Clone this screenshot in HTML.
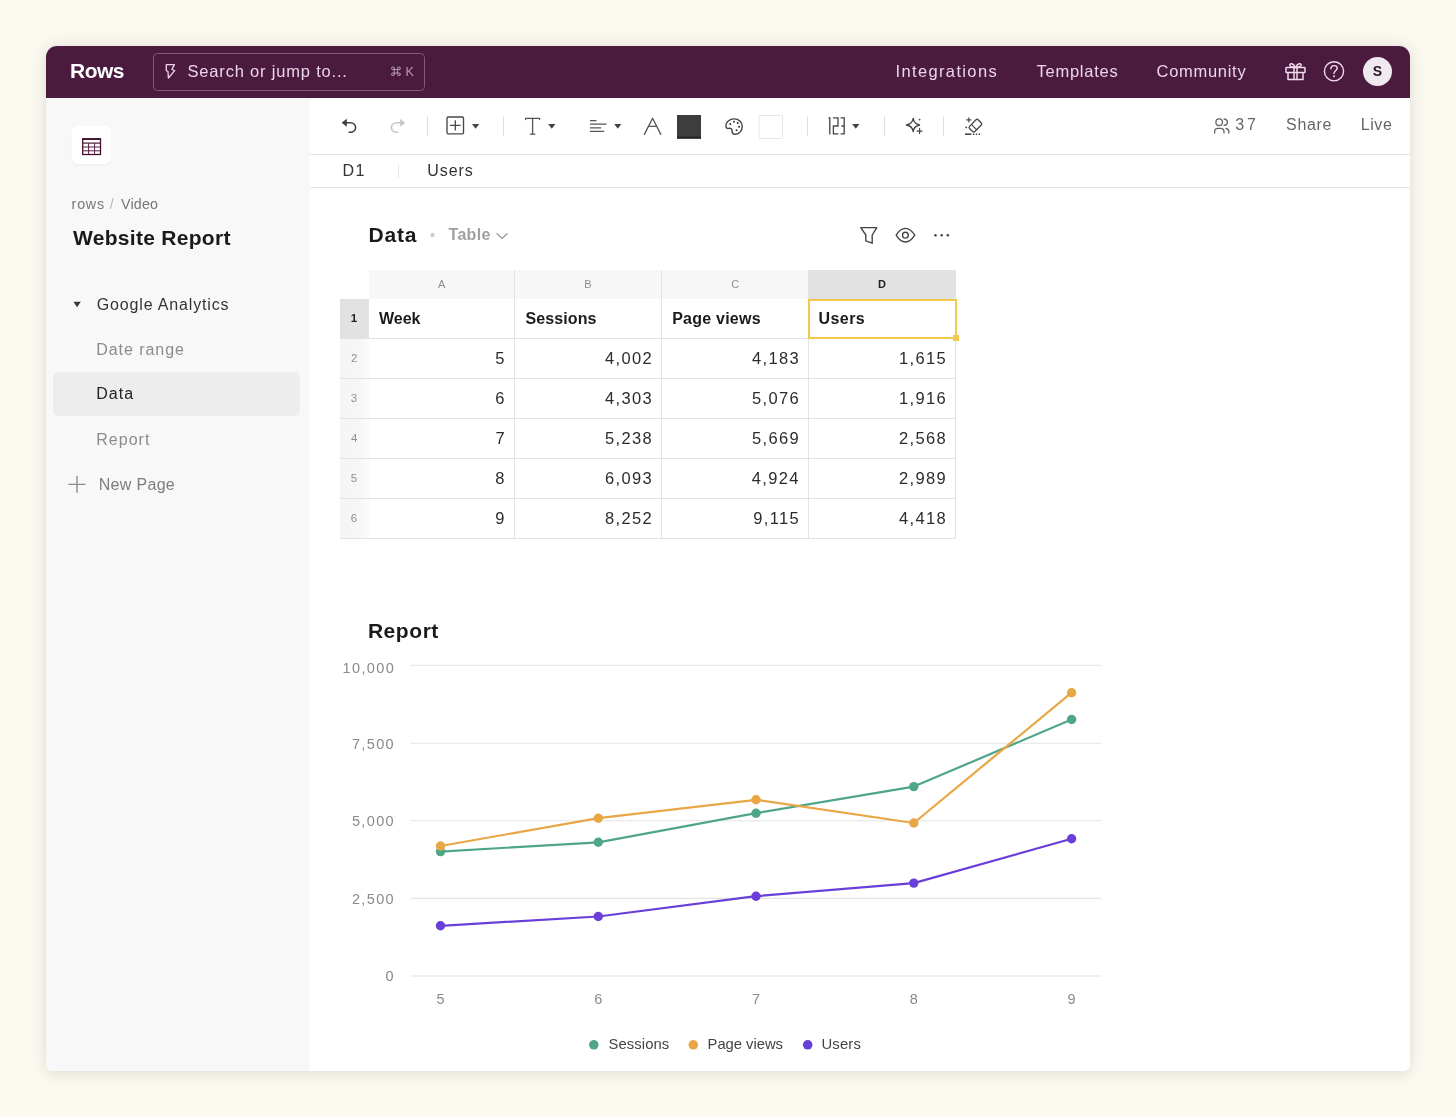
<!DOCTYPE html>
<html>
<head>
<meta charset="utf-8">
<title>Rows - Website Report</title>
<style>
*{box-sizing:border-box;margin:0;padding:0}
html,body{width:1456px;height:1117px;overflow:hidden}
body{background:#fcf9f1;font-family:"Liberation Sans",sans-serif;position:relative;color:#222}
.abs{position:absolute;white-space:pre;line-height:1}
#shadow{position:absolute;left:46px;top:46px;width:1364px;height:1025px;border-radius:11px 11px 7px 7px;box-shadow:0 0 18px rgba(65,68,52,.12),0 5px 12px rgba(65,68,52,.05)}
#win{position:absolute;left:46px;top:46px;width:1364px;height:1025px;background:#fff;border-radius:11px 11px 7px 7px;overflow:hidden}
#topbar{position:absolute;left:0;top:0;width:1364px;height:52px;background:#4a1a3f}
#sidebar{position:absolute;left:0;top:52px;width:264px;height:973px;background:#f8f8f8}
#tbline{position:absolute;left:264px;top:108px;width:1100px;height:1px;background:#e2e2e2}
#fbline{position:absolute;left:264px;top:141px;width:1100px;height:1px;background:#e4e4e4}
#page{position:absolute;left:0;top:0;width:1456px;height:1117px;will-change:transform}
</style>
</head>
<body>
<div id="shadow"></div>
<div id="win">
  <div id="topbar"></div>
  <div id="sidebar"></div>
  <div id="tbline"></div>
  <div id="fbline"></div>
</div>
<div id="page">
<!-- SHAPES -->
<div class="abs" style="left:153px;top:52.5px;width:271.5px;height:38px;border:1px solid #80597a;border-radius:4.5px"></div>
<div class="abs" style="left:1363px;top:56.5px;width:29.4px;height:29.4px;border-radius:50%;background:#f0e9ef"></div>
<div class="abs" style="left:72px;top:126px;width:39px;height:38px;border-radius:6px;background:#fff;box-shadow:0 1px 2px rgba(0,0,0,.05)"></div>
<div class="abs" style="left:53px;top:372px;width:247px;height:44px;border-radius:5px;background:#ededed"></div>
<div class="abs" style="left:398px;top:164px;width:1px;height:14px;background:#e6e6e6"></div>
<!-- TABLE -->
<div class="abs" style="left:369px;top:269.5px;width:587px;height:29.5px;background:#f7f7f7"></div>
<div class="abs" style="left:809px;top:269.5px;width:147px;height:29.5px;background:#e2e2e2"></div>
<div class="abs" style="left:340px;top:338px;width:29px;height:200px;background:linear-gradient(90deg,#f5f5f5 0,#f7f7f7 70%,#fbfbfb 100%)"></div>
<div class="abs" style="left:340px;top:299px;width:29px;height:39px;background:#e2e2e2"></div>
<div class="abs" style="left:340px;top:338px;width:616px;height:1px;background:#e3e3e3"></div>
<div class="abs" style="left:340px;top:378px;width:616px;height:1px;background:#e3e3e3"></div>
<div class="abs" style="left:340px;top:418px;width:616px;height:1px;background:#e3e3e3"></div>
<div class="abs" style="left:340px;top:458px;width:616px;height:1px;background:#e3e3e3"></div>
<div class="abs" style="left:340px;top:498px;width:616px;height:1px;background:#e3e3e3"></div>
<div class="abs" style="left:340px;top:538px;width:616px;height:1px;background:#e3e3e3"></div>
<div class="abs" style="left:514px;top:269.5px;width:1px;height:269.5px;background:#e3e3e3"></div>
<div class="abs" style="left:661px;top:269.5px;width:1px;height:269.5px;background:#e3e3e3"></div>
<div class="abs" style="left:808px;top:269.5px;width:1px;height:269.5px;background:#e3e3e3"></div>
<div class="abs" style="left:955px;top:269.5px;width:1px;height:269.5px;background:#e3e3e3"></div>
<div class="abs" style="left:808px;top:298.5px;width:148.5px;height:40px;border:2px solid #f2c94c"></div>
<div class="abs" style="left:953px;top:335px;width:6px;height:6px;background:#f2c94c"></div>
<!-- CHART -->
<svg class="abs" style="left:0;top:0" width="1456" height="1117" viewBox="0 0 1456 1117">
<line x1="410.5" x2="1101" y1="665.2" y2="665.2" stroke="#e4e4e4" stroke-width="1.1"/>
<line x1="410.5" x2="1101" y1="743.2" y2="743.2" stroke="#e4e4e4" stroke-width="1.1"/>
<line x1="410.5" x2="1101" y1="820.8" y2="820.8" stroke="#e4e4e4" stroke-width="1.1"/>
<line x1="410.5" x2="1101" y1="898.4" y2="898.4" stroke="#e4e4e4" stroke-width="1.1"/>
<line x1="410.5" x2="1101" y1="976" y2="976" stroke="#e4e4e4" stroke-width="1.1"/>
<polyline points="440.5,851.6 598.3,842.3 756.0,813.2 913.8,786.6 1071.6,719.5" fill="none" stroke="#4fa58a" stroke-width="2.2" stroke-linejoin="round"/>
<circle cx="440.5" cy="851.6" r="4.7" fill="#4fa58a"/>
<circle cx="598.3" cy="842.3" r="4.7" fill="#4fa58a"/>
<circle cx="756.0" cy="813.2" r="4.7" fill="#4fa58a"/>
<circle cx="913.8" cy="786.6" r="4.7" fill="#4fa58a"/>
<circle cx="1071.6" cy="719.5" r="4.7" fill="#4fa58a"/>
<polyline points="440.5,846.0 598.3,818.2 756.0,799.8 913.8,823.0 1071.6,692.7" fill="none" stroke="#e9a645" stroke-width="2.2" stroke-linejoin="round"/>
<circle cx="440.5" cy="846.0" r="4.7" fill="#e9a645"/>
<circle cx="598.3" cy="818.2" r="4.7" fill="#e9a645"/>
<circle cx="756.0" cy="799.8" r="4.7" fill="#e9a645"/>
<circle cx="913.8" cy="823.0" r="4.7" fill="#e9a645"/>
<circle cx="1071.6" cy="692.7" r="4.7" fill="#e9a645"/>
<polyline points="440.5,925.8 598.3,916.5 756.0,896.2 913.8,883.1 1071.6,838.7" fill="none" stroke="#6a3fd9" stroke-width="2.2" stroke-linejoin="round"/>
<circle cx="440.5" cy="925.8" r="4.7" fill="#6a3fd9"/>
<circle cx="598.3" cy="916.5" r="4.7" fill="#6a3fd9"/>
<circle cx="756.0" cy="896.2" r="4.7" fill="#6a3fd9"/>
<circle cx="913.8" cy="883.1" r="4.7" fill="#6a3fd9"/>
<circle cx="1071.6" cy="838.7" r="4.7" fill="#6a3fd9"/>
<circle cx="593.8" cy="1044.8" r="4.8" fill="#4fa58a"/><circle cx="693.3" cy="1044.8" r="4.8" fill="#e9a645"/><circle cx="807.7" cy="1044.8" r="4.8" fill="#6a3fd9"/>
</svg>
<!-- ICONS -->
<svg class="abs" style="left:0;top:0" width="1456" height="1117" viewBox="0 0 1456 1117" fill="none" stroke-linecap="round" stroke-linejoin="round">
<!-- bolt -->
<path d="M166.3 64.6 H174.4 L171.9 69.4 L174.7 70.6 L168.4 78 L168 71.5 L166.3 70.6 Z" stroke="#eccfe7" stroke-width="1.35"/>
<!-- cmd symbol -->
<g stroke="#b59ab0" stroke-width="1" >
<path d="M394.2 69.6 V73 M397.6 69.6 V73 M394.2 69.6 H397.6 M394.2 73 H397.6"/>
<circle cx="392.9" cy="68.3" r="1.4"/><circle cx="398.9" cy="68.3" r="1.4"/><circle cx="392.9" cy="74.3" r="1.4"/><circle cx="398.9" cy="74.3" r="1.4"/>
</g>
<!-- gift -->
<g stroke="#f0dcec" stroke-width="1.5">
<rect x="1286" y="67.6" width="19" height="5"  rx=".6"/>
<path d="M1288 72.8 V79.6 H1303 V72.8"/>
<path d="M1294 67.6 V79.6 M1297 67.6 V79.6"/>
<path d="M1295.2 67.4 C1292.5 67.4 1289.6 66.6 1289.8 64.8 C1290 63 1293.4 63 1295.2 67.4 Z M1295.8 67.4 C1298.5 67.4 1301.4 66.6 1301.2 64.8 C1301 63 1297.6 63 1295.8 67.4 Z"/>
</g>
<!-- help -->
<g stroke="#f0dcec" stroke-width="1.4">
<circle cx="1334" cy="71.3" r="9.6"/>
<path d="M1330.9 68.8 C1330.9 66.7 1332.4 65.6 1334.1 65.6 C1335.8 65.6 1337.2 66.7 1337.2 68.3 C1337.2 70.6 1334 70.6 1334 73.4"/>
</g>
<circle cx="1334" cy="76.3" r="1" fill="#f0dcec"/>

<!-- sidebar table icon -->
<g stroke="#45102f" stroke-linecap="butt" stroke-linejoin="miter">
<rect x="82.7" y="138.8" width="17.8" height="15.7" stroke-width="1.3"/>
<path d="M82.7 139.2 H100.5" stroke-width="1.6"/>
<path d="M82.7 143.1 H100.5" stroke-width="1.15"/>
<path d="M82.7 147 H100.5 M82.7 150.8 H100.5 M88.6 143.1 V154.5 M94.6 143.1 V154.5" stroke-width="1" stroke="#5a1f47"/>
</g>
<!-- sidebar triangle -->
<path d="M73.4 301.8 H80.8 L77.1 307.2 Z" fill="#3a3a3a"/>
<!-- plus -->
<path d="M68.4 484.4 H85.6 M77 476 V492.8" stroke="#8a8a8a" stroke-width="1.4" stroke-linecap="butt"/>

<!-- undo -->
<path d="M345.6 122.8 H350.2 C353.4 122.8 355.6 124.8 355.6 127.5 C355.6 130.2 353.4 132.3 350.2 132.3 H349.2" stroke="#3f3f3f" stroke-width="1.6"/>
<path d="M341.7 122.8 L346.8 118.8 V126.8 Z" fill="#3f3f3f"/>
<!-- redo -->
<path d="M401.4 122.8 H396.8 C393.6 122.8 391.4 124.8 391.4 127.5 C391.4 130.2 393.6 132.3 396.8 132.3 H397.8" stroke="#c8c8c8" stroke-width="1.6"/>
<path d="M405.3 122.8 L400.2 118.8 V126.8 Z" fill="#c8c8c8"/>
<!-- separators -->
<path d="M427.5 116 V136 M503.5 116 V136 M807.5 116 V136 M884.5 116 V136 M943.5 116 V136" stroke="#e0e0e0" stroke-width="1" stroke-linecap="butt"/>
<!-- box plus -->
<g stroke="#484848" stroke-width="1.35">
<rect x="447" y="117" width="16.5" height="16.8" rx="1.2"/>
<path d="M450 125.4 H460.6 M455.3 120.2 V130.6" stroke-width="1.3" stroke-linecap="butt"/>
</g>
<!-- carets -->
<g fill="#444">
<path d="M472 124 H479.2 L475.6 128.8 Z"/>
<path d="M548.2 124 H555.4 L551.8 128.8 Z"/>
<path d="M614.2 124 H621.4 L617.8 128.8 Z"/>
<path d="M852.2 124 H859.4 L855.8 128.8 Z"/>
</g>
<!-- T -->
<g stroke="#555" stroke-width="1.3">
<path d="M525.6 119.6 V118.4 H539.6 V119.6 M532.6 118.4 V134.2 M530.4 134.2 H534.8"/>
</g>
<!-- align -->
<g stroke="#555" stroke-width="1.3" stroke-linecap="butt">
<path d="M590 120.6 H596.4 M590 124.2 H606.4 M590 127.8 H601.2 M590 131.4 H604.2"/>
</g>
<!-- A -->
<path d="M644.4 134.4 L652.6 118.2 L660.8 134.4 M648.2 126.4 H657" stroke="#555" stroke-width="1.3"/>
<!-- dark swatch -->
<rect x="677" y="115" width="24" height="23.6" fill="#3d3d3d"/>
<rect x="677" y="136.6" width="24" height="2" fill="#222"/>
<!-- palette -->
<g stroke="#444" stroke-width="1.4">
<path d="M734.2 118.9 C729.4 118.9 725.9 122.4 725.9 126 C725.9 128.2 727.4 128.8 728.9 128.4 C730.6 127.9 732 128.6 732 130.4 C732 132.6 733 134.2 735.2 134.2 C739.4 134.2 742.2 130.6 742.2 126.4 C742.2 122.2 738.8 118.9 734.2 118.9 Z"/>
</g>
<g fill="#333"><circle cx="730.3" cy="123.9" r="1"/><circle cx="734" cy="121.8" r="1"/><circle cx="737.7" cy="123.1" r="1"/><circle cx="739.1" cy="126.7" r="1"/><circle cx="736.6" cy="130.3" r="1"/></g>
<!-- white swatch -->
<rect x="759.5" y="115.5" width="23" height="23" fill="#fff" stroke="#e6e6e6" stroke-width="1"/>
<!-- 123 -->
<g stroke="#444" stroke-width="1.3" stroke-linecap="butt" stroke-linejoin="miter">
<path d="M828.4 117.8 H829.8 V134.4"/>
<path d="M833 117.8 H838 V126 H833.4 V133.8 H838.4"/>
<path d="M840.6 117.8 H844.2 V133.8 H840.6 M841.4 126 H844.2"/>
</g>
<!-- sparkle -->
<g stroke="#444" stroke-width="1.3">
<path d="M913.2 118.4 C913.8 122.4 915.4 124.2 919.6 125 C915.4 125.8 913.8 127.6 913.2 131.6 C912.6 127.6 911 125.8 906.4 125 C911 124.2 912.6 122.4 913.2 118.4 Z"/>
<path d="M919.6 128.6 V133.6 M917.1 131.1 H922.1" stroke-width="1.2"/>
</g>
<circle cx="919.6" cy="119.6" r=".9" fill="#444"/>
<!-- eraser -->
<g stroke="#444" stroke-width="1.3">
<rect x="-6.1" y="-3.7" width="12.2" height="7.4" rx="1.5" transform="translate(975.4 125.7) rotate(-45)"/>
<path d="M971.6 124.6 L976.6 129.6"/>
<path d="M968.8 117.8 V122 M966.7 119.9 H970.9" stroke-width="1.1"/>
<path d="M965 134.2 H971.4" stroke-width="1.6" stroke-linecap="butt"/>
<path d="M973 134.2 H981.6" stroke-width="1.4" stroke-dasharray="1.4 1.4" stroke-linecap="butt"/>
</g>
<circle cx="966.2" cy="127.4" r=".9" fill="#444"/>
<!-- people -->
<g stroke="#666" stroke-width="1.3">
<circle cx="1219.2" cy="122.2" r="3.3"/>
<path d="M1214.6 133 V131.6 C1214.6 129.6 1216 128.4 1218 128.4 H1220.6 C1222.6 128.4 1224 129.6 1224 131.6 V133"/>
<path d="M1224.2 119 C1226 119.2 1227.4 120.5 1227.4 122.2 C1227.4 123.9 1226 125.2 1224.2 125.4"/>
<path d="M1226 128.5 C1227.8 128.8 1228.8 130 1228.8 131.6 V133"/>
</g>
<!-- filter -->
<path d="M860.8 227.6 H876.8 L872.2 235 V243.2 L865.8 240.8 V235 Z" stroke="#444" stroke-width="1.4"/>
<!-- eye -->
<g stroke="#444" stroke-width="1.4">
<path d="M896.2 235.2 C899 230.6 902 228.4 905.4 228.4 C908.8 228.4 911.8 230.6 914.8 235.2 C911.8 239.8 908.8 242 905.4 242 C902 242 899 239.8 896.2 235.2 Z"/>
<circle cx="905.4" cy="235.2" r="2.9"/>
</g>
<!-- dots -->
<g fill="#444"><circle cx="935.5" cy="235.3" r="1.25"/><circle cx="941.7" cy="235.3" r="1.25"/><circle cx="947.8" cy="235.3" r="1.25"/></g>
<!-- table dot + chevron -->
<circle cx="432.6" cy="235" r="2.2" fill="#cfcfcf"/>
<path d="M497 233.6 L502.1 238.4 L507.2 233.6" stroke="#8a8a8a" stroke-width="1.2"/>
</svg>
<!-- TEXT -->
<div class="abs" style="left:70.10px;top:60px;font-size:21px;color:#fff;letter-spacing:-0.58px;font-weight:bold">Rows</div>
<div class="abs" style="left:187.55px;top:63px;font-size:16.5px;color:#ecd6e8;letter-spacing:0.81px">Search or jump to...</div>
<div class="abs" style="left:405.60px;top:66px;font-size:12.5px;color:#b79bb2;letter-spacing:0.00px">K</div>
<div class="abs" style="left:895.50px;top:63px;font-size:16.5px;color:#ecd6e8;letter-spacing:1.36px">Integrations</div>
<div class="abs" style="left:1036.45px;top:63px;font-size:16.5px;color:#ecd6e8;letter-spacing:0.77px">Templates</div>
<div class="abs" style="left:1156.55px;top:63px;font-size:16.5px;color:#ecd6e8;letter-spacing:0.71px">Community</div>
<div class="abs" style="left:1372.70px;top:64px;font-size:14px;color:#2a1025;letter-spacing:0.00px;font-weight:bold">S</div>
<div class="abs" style="left:71.60px;top:197px;font-size:14.3px;color:#777;letter-spacing:0.78px">rows</div>
<div class="abs" style="left:109.80px;top:197px;font-size:14.3px;color:#b5b5b5;letter-spacing:0.00px">/</div>
<div class="abs" style="left:121.10px;top:197px;font-size:14.3px;color:#777;letter-spacing:0.16px">Video</div>
<div class="abs" style="left:73.00px;top:227px;font-size:21px;color:#1a1a1a;letter-spacing:0.29px;font-weight:bold">Website Report</div>
<div class="abs" style="left:96.75px;top:297px;font-size:16px;color:#333;letter-spacing:0.84px">Google Analytics</div>
<div class="abs" style="left:96.25px;top:342px;font-size:16px;color:#8c8c8c;letter-spacing:0.94px">Date range</div>
<div class="abs" style="left:96.25px;top:386px;font-size:16px;color:#222;letter-spacing:1.00px">Data</div>
<div class="abs" style="left:96.25px;top:432px;font-size:16px;color:#8c8c8c;letter-spacing:1.01px">Report</div>
<div class="abs" style="left:98.75px;top:477px;font-size:16px;color:#7d7d7d;letter-spacing:0.31px">New Page</div>
<div class="abs" style="left:1235.25px;top:117px;font-size:16px;color:#666;letter-spacing:2.95px">37</div>
<div class="abs" style="left:1286.05px;top:117px;font-size:16px;color:#666;letter-spacing:0.69px">Share</div>
<div class="abs" style="left:1360.85px;top:117px;font-size:16px;color:#666;letter-spacing:0.53px">Live</div>
<div class="abs" style="left:342.55px;top:163px;font-size:16px;color:#333;letter-spacing:1.50px">D1</div>
<div class="abs" style="left:427.35px;top:163px;font-size:16px;color:#333;letter-spacing:0.88px">Users</div>
<div class="abs" style="left:368.40px;top:224px;font-size:21px;color:#1a1a1a;letter-spacing:0.82px;font-weight:bold">Data</div>
<div class="abs" style="left:448.55px;top:227px;font-size:16px;color:#a0a0a0;letter-spacing:0.29px;font-weight:bold">Table</div>
<div class="abs" style="left:367.90px;top:620px;font-size:21px;color:#1a1a1a;letter-spacing:0.56px;font-weight:bold">Report</div>
<div class="abs" style="left:438.07px;top:279px;font-size:11px;color:#8e8e8e;letter-spacing:0.00px">A</div>
<div class="abs" style="left:584.33px;top:279px;font-size:11px;color:#8e8e8e;letter-spacing:0.00px">B</div>
<div class="abs" style="left:731.20px;top:279px;font-size:11px;color:#8e8e8e;letter-spacing:0.00px">C</div>
<div class="abs" style="left:878.08px;top:279px;font-size:11px;color:#222;letter-spacing:0.00px;font-weight:bold">D</div>
<div class="abs" style="left:350.73px;top:313px;font-size:11.5px;color:#222;letter-spacing:0.00px;font-weight:bold">1</div>
<div class="abs" style="left:350.98px;top:353px;font-size:11.5px;color:#8f8f8f;letter-spacing:0.00px">2</div>
<div class="abs" style="left:350.85px;top:393px;font-size:11.5px;color:#8f8f8f;letter-spacing:0.00px">3</div>
<div class="abs" style="left:350.98px;top:433px;font-size:11.5px;color:#8f8f8f;letter-spacing:0.00px">4</div>
<div class="abs" style="left:350.85px;top:473px;font-size:11.5px;color:#8f8f8f;letter-spacing:0.00px">5</div>
<div class="abs" style="left:350.85px;top:513px;font-size:11.5px;color:#8f8f8f;letter-spacing:0.00px">6</div>
<div class="abs" style="left:379.00px;top:311px;font-size:16px;color:#1a1a1a;letter-spacing:0.00px;font-weight:bold">Week</div>
<div class="abs" style="left:525.50px;top:311px;font-size:16px;color:#1a1a1a;letter-spacing:0.09px;font-weight:bold">Sessions</div>
<div class="abs" style="left:672.20px;top:311px;font-size:16px;color:#1a1a1a;letter-spacing:0.23px;font-weight:bold">Page views</div>
<div class="abs" style="left:818.60px;top:311px;font-size:16px;color:#1a1a1a;letter-spacing:0.41px;font-weight:bold">Users</div>
<div class="abs" style="left:495.30px;top:350px;font-size:16.5px;color:#2b2b2b;letter-spacing:1.30px">5</div>
<div class="abs" style="left:605.10px;top:350px;font-size:16.5px;color:#2b2b2b;letter-spacing:1.30px">4,002</div>
<div class="abs" style="left:752.10px;top:350px;font-size:16.5px;color:#2b2b2b;letter-spacing:1.30px">4,183</div>
<div class="abs" style="left:899.10px;top:350px;font-size:16.5px;color:#2b2b2b;letter-spacing:1.30px">1,615</div>
<div class="abs" style="left:495.30px;top:390px;font-size:16.5px;color:#2b2b2b;letter-spacing:1.30px">6</div>
<div class="abs" style="left:605.10px;top:390px;font-size:16.5px;color:#2b2b2b;letter-spacing:1.30px">4,303</div>
<div class="abs" style="left:752.10px;top:390px;font-size:16.5px;color:#2b2b2b;letter-spacing:1.30px">5,076</div>
<div class="abs" style="left:899.10px;top:390px;font-size:16.5px;color:#2b2b2b;letter-spacing:1.30px">1,916</div>
<div class="abs" style="left:495.55px;top:430px;font-size:16.5px;color:#2b2b2b;letter-spacing:1.30px">7</div>
<div class="abs" style="left:605.10px;top:430px;font-size:16.5px;color:#2b2b2b;letter-spacing:1.30px">5,238</div>
<div class="abs" style="left:752.10px;top:430px;font-size:16.5px;color:#2b2b2b;letter-spacing:1.30px">5,669</div>
<div class="abs" style="left:899.10px;top:430px;font-size:16.5px;color:#2b2b2b;letter-spacing:1.30px">2,568</div>
<div class="abs" style="left:495.30px;top:470px;font-size:16.5px;color:#2b2b2b;letter-spacing:1.30px">8</div>
<div class="abs" style="left:605.10px;top:470px;font-size:16.5px;color:#2b2b2b;letter-spacing:1.30px">6,093</div>
<div class="abs" style="left:751.85px;top:470px;font-size:16.5px;color:#2b2b2b;letter-spacing:1.30px">4,924</div>
<div class="abs" style="left:899.10px;top:470px;font-size:16.5px;color:#2b2b2b;letter-spacing:1.30px">2,989</div>
<div class="abs" style="left:495.30px;top:510px;font-size:16.5px;color:#2b2b2b;letter-spacing:1.30px">9</div>
<div class="abs" style="left:605.10px;top:510px;font-size:16.5px;color:#2b2b2b;letter-spacing:1.30px">8,252</div>
<div class="abs" style="left:753.35px;top:510px;font-size:16.5px;color:#2b2b2b;letter-spacing:1.30px">9,115</div>
<div class="abs" style="left:899.10px;top:510px;font-size:16.5px;color:#2b2b2b;letter-spacing:1.30px">4,418</div>
<div class="abs" style="left:342.60px;top:661px;font-size:14.5px;color:#8a8a8a;letter-spacing:1.35px">10,000</div>
<div class="abs" style="left:351.95px;top:737px;font-size:14.5px;color:#8a8a8a;letter-spacing:1.35px">7,500</div>
<div class="abs" style="left:351.95px;top:814px;font-size:14.5px;color:#8a8a8a;letter-spacing:1.35px">5,000</div>
<div class="abs" style="left:351.95px;top:892px;font-size:14.5px;color:#8a8a8a;letter-spacing:1.35px">2,500</div>
<div class="abs" style="left:385.60px;top:969px;font-size:14.5px;color:#8a8a8a;letter-spacing:1.35px">0</div>
<div class="abs" style="left:436.50px;top:992px;font-size:14.5px;color:#8a8a8a;letter-spacing:0.00px">5</div>
<div class="abs" style="left:594.15px;top:992px;font-size:14.5px;color:#8a8a8a;letter-spacing:0.00px">6</div>
<div class="abs" style="left:752.05px;top:992px;font-size:14.5px;color:#8a8a8a;letter-spacing:0.00px">7</div>
<div class="abs" style="left:909.82px;top:992px;font-size:14.5px;color:#8a8a8a;letter-spacing:0.00px">8</div>
<div class="abs" style="left:1067.47px;top:992px;font-size:14.5px;color:#8a8a8a;letter-spacing:0.00px">9</div>
<div class="abs" style="left:608.55px;top:1037px;font-size:14.8px;color:#444;letter-spacing:0.08px">Sessions</div>
<div class="abs" style="left:707.55px;top:1037px;font-size:14.8px;color:#444;letter-spacing:-0.03px">Page views</div>
<div class="abs" style="left:821.45px;top:1037px;font-size:14.8px;color:#444;letter-spacing:0.19px">Users</div>
</div>
</body>
</html>
